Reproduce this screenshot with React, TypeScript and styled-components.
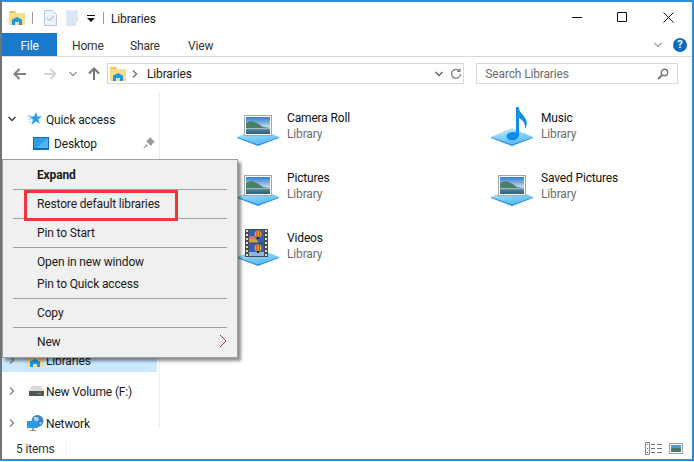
import React from "react";
import styled, { createGlobalStyle } from "styled-components";

const GlobalStyle = createGlobalStyle`
  html, body {
    margin: 0;
    padding: 0;
    background: #fff;
  }
  body {
    font-family: Roboto, "Noto Sans", sans-serif;
    font-size: 12px;
    letter-spacing: -0.15px;
    color: #1a1a1a;
  }
`;

const Window = styled.div`
  position: relative;
  box-sizing: border-box;
  width: 694px;
  height: 461px;
  display: flex;
  flex-direction: column;
  overflow: hidden;
  background: #fff;
  border-top: 2px solid #2b90d9;
  border-bottom: 2px solid #2b90d9;
  border-right: 2px solid #2b90d9;
  border-left: 2px solid #6f7478;
`;

const TitleBar = styled.div`
  display: flex;
  align-items: center;
  height: 31px;
  flex: none;
  padding-left: 7px;
`;

const TitleText = styled.span`
  margin-left: 7px;
  padding-top: 2px;
  color: #222;
`;

const QuickSep = styled.span`
  width: 1px;
  height: 12px;
  background: #9a9a9a;
  margin: 0 11px 0 7px;
`;

const WinButtons = styled.div`
  margin-left: auto;
  display: flex;
  align-items: center;
  padding-right: 18px;
  gap: 35px;
  height: 100%;
  padding-bottom: 1px;
  box-sizing: border-box;
`;

const TabBar = styled.div`
  display: flex;
  align-items: center;
  height: 23px;
  flex: none;
  border-bottom: 1px solid #dadada;
`;

const FileTab = styled.div`
  box-sizing: border-box;
  width: 55px;
  height: 100%;
  padding-top: 2px;
  display: flex;
  align-items: center;
  justify-content: center;
  background: #1979ca;
  color: #fff;
  margin-right: 15px;
`;

const Tab = styled.div`
  width: 58px;
  padding-top: 2px;
  color: #333;
`;

const TabRight = styled.div`
  margin-left: auto;
  display: flex;
  align-items: center;
  gap: 10px;
  padding-right: 5px;
`;

const HelpBadge = styled.div`
  width: 14px;
  height: 14px;
  border-radius: 50%;
  background: #0f6cbd;
  color: #fff;
  font-weight: 700;
  font-size: 11px;
  line-height: 14px;
  text-align: center;
`;

const AddressRow = styled.div`
  display: flex;
  align-items: center;
  height: 21px;
  flex: none;
  padding: 6px 14px 7px 11px;
`;

const NavButtons = styled.div`
  display: flex;
  align-items: center;
  width: 94px;
  flex: none;
`;

const NavButton = styled.span<{ $gap: number }>`
  display: flex;
  margin-right: ${(p) => p.$gap}px;
`;

const AddressBox = styled.div`
  box-sizing: border-box;
  width: 358px;
  height: 21px;
  border: 1px solid #d9d9d9;
  display: flex;
  align-items: center;
  padding-left: 2px;
  gap: 4px;
`;

const Crumb = styled.span`
  margin-left: 3px;
`;

const AddressEnd = styled.div`
  margin-left: auto;
  display: flex;
  align-items: center;
  gap: 6px;
  padding-right: 1px;
`;

const SearchBox = styled.div`
  box-sizing: border-box;
  width: 202px;
  height: 21px;
  margin-left: 12px;
  border: 1px solid #d9d9d9;
  display: flex;
  align-items: center;
  justify-content: space-between;
  padding: 0 8px;
  color: #6d6d6d;
`;

const Main = styled.div`
  flex: 1;
  min-height: 0;
  display: flex;
`;

const Nav = styled.div`
  width: 155px;
  flex: none;
  padding-top: 16px;
  margin-right: 2px;
`;

const NavDivider = styled.div`
  width: 1px;
  flex: none;
  background: #efefef;
  margin-bottom: 9px;
`;

const NavRow = styled.div<{ $selected?: boolean; $height?: number }>`
  display: flex;
  align-items: center;
  height: ${(p) => p.$height ?? 24}px;
  background: ${(p) => (p.$selected ? "#cce8ff" : "transparent")};
  color: #1a1a1a;
  position: relative;
`;

const Twisty = styled.span`
  box-sizing: border-box;
  width: 25px;
  flex: none;
  display: flex;
  justify-content: center;
  padding-right: 5px;
`;

const NavIconSlot = styled.span<{ $indent?: number }>`
  width: ${(p) => (p.$indent ? 21 : 19)}px;
  margin-left: ${(p) => p.$indent ?? 0}px;
  flex: none;
  display: flex;
  align-items: center;
`;

const NavLabel = styled.span`
  padding-top: 2px;
  white-space: nowrap;
`;

const PinSlot = styled.span`
  position: absolute;
  right: 2px;
  top: 6px;
`;

const Content = styled.div`
  flex: 1;
  display: grid;
  grid-template-columns: 254px 254px;
  grid-auto-rows: 60px;
  padding: 10px 0 0 77px;
`;

const Item = styled.div`
  display: flex;
  align-items: center;
  gap: 8px;
  height: 48px;
`;

const ItemText = styled.div`
  display: flex;
  flex-direction: column;
  padding-top: 2px;
  line-height: 16px;
`;

const ItemName = styled.span`
  color: #111;
`;

const ItemType = styled.span`
  color: #6d6d6d;
`;

const StatusBar = styled.div`
  height: 22px;
  flex: none;
  display: flex;
  align-items: center;
  padding: 0 14px;
  color: #333;
`;

const StatusText = styled.span`
  padding-top: 2px;
`;

const StatusSep = styled.span`
  width: 1px;
  height: 14px;
  background: #eee;
  margin-left: 10px;
`;

const ViewIcons = styled.div`
  margin-left: auto;
  display: flex;
  align-items: center;
  gap: 7px;
  margin-right: -5px;
`;

const Menu = styled.div`
  position: absolute;
  left: 0;
  top: 157px;
  box-sizing: border-box;
  width: 236px;
  height: 199px;
  padding: 3px 10px 0;
  background: #f0f0f0;
  border: 1px solid #a0a0a0;
  box-shadow: 3px 3px 3px rgba(0, 0, 0, 0.45);
`;

const MenuEntry = styled.div<{ $bold?: boolean }>`
  box-sizing: border-box;
  display: flex;
  align-items: center;
  justify-content: space-between;
  height: 22px;
  padding: 2px 0 0 24px;
  font-weight: ${(p) => (p.$bold ? 700 : 400)};
  color: #1a1a1a;
`;

const MenuSep = styled.div`
  height: 1px;
  background: #a0a0a0;
  margin: 4px 0 2px;
`;

const SubmenuArrow = styled.svg`
  margin-top: -2px;
`;

const Highlight = styled.div`
  position: absolute;
  left: 21px;
  top: 30px;
  width: 154px;
  height: 31px;
  box-sizing: border-box;
  border: 3px solid #f5333a;
`;

const LibFolder = ({ size = 16 }: { size?: number }) => (
  <svg width={size} height={size} viewBox="0 0 16 16">
    <path d="M0 1h6l1 2h9v12H0z" fill="#f9dd88" />
    <path d="M0 1h6l1 2H0z" fill="#eec65d" />
    <path d="M3 15V9.500h10V15h-3v-3H6v3z" fill="#1b9ae4" />
    <path d="M2.500 10 8 7l5.500 3z" fill="#1b9ae4" />
  </svg>
);

const SceneDefs = () => (
  <svg width="0" height="0" style={{ position: "absolute" }}>
    <defs>
      <linearGradient id="plat" x1="0" y1="0" x2="0.4" y2="1">
        <stop offset="0" stopColor="#cdeefd" />
        <stop offset="0.6" stopColor="#86d2f8" />
        <stop offset="1" stopColor="#5dbdf2" />
      </linearGradient>
      <linearGradient id="sky" x1="0" y1="0" x2="0" y2="1">
        <stop offset="0" stopColor="#2f7fd0" />
        <stop offset="0.4" stopColor="#8fbbe2" />
        <stop offset="0.7" stopColor="#e6eef2" />
      </linearGradient>
      <linearGradient id="water" x1="0" y1="0" x2="0" y2="1">
        <stop offset="0" stopColor="#b6cfd8" />
        <stop offset="0.3" stopColor="#4f7f96" />
        <stop offset="1" stopColor="#2f5f78" />
      </linearGradient>
    </defs>
  </svg>
);

const Platform = () => (
  <>
    <path d="M0 35 L21 26 L42 35 L21 42 Z" fill="url(#plat)" />
    <path d="M0 35 L21 42 L42 35 L42 36 L21 44 L0 36 Z" fill="#2b95e4" />
  </>
);

const PictureIcon = () => (
  <svg width="42" height="46" viewBox="0 0 42 46">
    <Platform />
    <rect x="7.500" y="13.500" width="27" height="20" fill="#fff" stroke="#a6a6a6" />
    <rect x="9" y="15" width="24" height="17" fill="url(#sky)" />
    <path d="M9 21 L14 19 L20 21 L26 25 L33 26 V32 H9 Z" fill="#4a7f68" />
    <rect x="9" y="26" width="24" height="6" fill="url(#water)" />
  </svg>
);

const MusicIcon = () => (
  <svg width="42" height="46" viewBox="0 0 42 46">
    <Platform />
    <path d="M25 5 H27.500 C28 11 34 13 35.500 19 C36.200 22.500 35.500 25 34 27 C34.500 23 33.500 19 28 16 V33 C28 37 23 39 19 38 C14.500 37 14.500 33 18 31 C20.500 29.700 23 29.700 25 30.500 Z" fill="#0b8fe6" />
  </svg>
);

const Balloon = ({ y }: { y: number }) => (
  <g>
    <circle cx="21" cy={y} r="3.500" fill="#e8a021" />
    <path d={`M19.500 ${y - 3}h1v6h-1zM22 ${y - 3}h1v6h-1z`} fill="#c4392f" />
    <path d={`M20 ${y + 3}h2v2h-2z`} fill="#1a1a1a" />
  </g>
);

const VideoIcon = () => (
  <svg width="42" height="46" viewBox="0 0 42 46">
    <Platform />
    <rect x="8" y="7" width="23" height="28" fill="#4a4a4a" />
    <rect x="12" y="8" width="15" height="12.500" fill="#2a62c0" />
    <rect x="12" y="22" width="15" height="12" fill="#2a62c0" />
    <path d="M12 15l5-1 2 3 3 3.500H12z" fill="#c9a04a" />
    <path d="M13 14h4v3h-4z" fill="#d66a8f" />
    <path d="M12 30h15v4H12z" fill="#8fb4d8" />
    <Balloon y={12} />
    <Balloon y={26} />
    {[8, 12, 16, 20, 24, 28, 32].map((y) => (
      <g key={y}>
        <rect x="9" y={y} width="2" height="2" fill="#ddd" />
        <rect x="28" y={y} width="2" height="2" fill="#ddd" />
      </g>
    ))}
  </svg>
);

const Chevron = ({ dir, color = "#8a8a8a" }: { dir: "right" | "down"; color?: string }) => (
  <svg width="10" height="10" viewBox="0 0 10 10">
    <path
      d={dir === "right" ? "M3 1.500 L6.500 5 L3 8.500" : "M1.500 3 L5 6.500 L8.500 3"}
      fill="none"
      stroke={color}
      strokeWidth="1.500"
    />
  </svg>
);

const Arrow = ({ dir, color }: { dir: "left" | "right" | "up"; color: string }) => {
  const d = {
    left: "M13 7 H2 M6.500 2 L1.500 7 L6.500 12",
    right: "M1 7 H12 M7.500 2 L12.500 7 L7.500 12",
    up: "M7 13 V2 M2 6.500 L7 1.500 L12 6.500",
  }[dir];
  return (
    <svg width="14" height="14" viewBox="0 0 14 14">
      <path d={d} fill="none" stroke={color} strokeWidth="2" />
    </svg>
  );
};

const items = [
  { name: "Camera Roll", icon: <PictureIcon /> },
  { name: "Music", icon: <MusicIcon /> },
  { name: "Pictures", icon: <PictureIcon /> },
  { name: "Saved Pictures", icon: <PictureIcon /> },
  { name: "Videos", icon: <VideoIcon /> },
];

const App: React.FC = () => (
  <>
    <GlobalStyle />
    <SceneDefs />
    <Window>
      <TitleBar>
        <LibFolder />
        <QuickSep />
        <svg width="13" height="16" viewBox="0 0 13 16">
          <path d="M.5.500h8l4 4v11H.5z" fill="#eef3fa" stroke="#b9c7dc" />
          <path d="M3 8l2.500 2.500L10 6" fill="none" stroke="#b9c7dc" strokeWidth="1.200" />
        </svg>
        <svg width="13" height="16" viewBox="0 0 13 16" style={{ marginLeft: 9 }}>
          <path d="M0 0h12v16H0z" fill="#dce6f4" />
          <path d="M10 12h3v4h-3z" fill="#fff" />
        </svg>
        <svg width="8" height="8" viewBox="0 0 8 8" style={{ margin: "2px 0 0 8px" }}>
          <path d="M0 0h8v1H0zM0 3h8L4 7z" fill="#111" />
        </svg>
        <QuickSep style={{ margin: "0 0 0 8px" }} />
        <TitleText>Libraries</TitleText>
        <WinButtons>
          <svg width="10" height="11" viewBox="0 0 10 11">
            <path d="M0 5.500h10" stroke="#111" />
          </svg>
          <svg width="10" height="10" viewBox="0 0 10 10" style={{ marginRight: 1 }}>
            <path d="M.5.500h9v9h-9z" fill="none" stroke="#111" />
          </svg>
          <svg width="11" height="11" viewBox="0 0 11 11">
            <path d="M.5.500l10 10M10.500.500l-10 10" stroke="#111" />
          </svg>
        </WinButtons>
      </TitleBar>

      <TabBar>
        <FileTab>File</FileTab>
        <Tab>Home</Tab>
        <Tab>Share</Tab>
        <Tab>View</Tab>
        <TabRight>
          <Chevron dir="down" color="#a8a8a8" />
          <HelpBadge>?</HelpBadge>
        </TabRight>
      </TabBar>

      <AddressRow>
        <NavButtons>
          <NavButton $gap={16}>
            <Arrow dir="left" color="#808080" />
          </NavButton>
          <NavButton $gap={11}>
            <Arrow dir="right" color="#d5d5d5" />
          </NavButton>
          <NavButton $gap={9}>
            <Chevron dir="down" color="#9a9a9a" />
          </NavButton>
          <NavButton $gap={0}>
            <Arrow dir="up" color="#777" />
          </NavButton>
        </NavButtons>
        <AddressBox>
          <LibFolder />
          <Chevron dir="right" color="#777" />
          <Crumb>Libraries</Crumb>
          <AddressEnd>
            <Chevron dir="down" color="#666" />
            <svg width="12" height="12" viewBox="0 0 12 12">
              <path d="M9.500 3A4.500 4.500 0 1 0 10.500 6" fill="none" stroke="#808080" strokeWidth="1.300" />
              <path d="M10.500 0v4h-4z" fill="#808080" />
            </svg>
          </AddressEnd>
        </AddressBox>
        <SearchBox>
          <span>Search Libraries</span>
          <svg width="12" height="12" viewBox="0 0 12 12">
            <circle cx="7.500" cy="4.500" r="3.200" fill="none" stroke="#777" strokeWidth="1.400" />
            <path d="M5 7L1 11" stroke="#777" strokeWidth="2" />
          </svg>
        </SearchBox>
      </AddressRow>

      <Main>
        <Nav>
          <NavRow>
            <Twisty>
              <Chevron dir="down" color="#444" />
            </Twisty>
            <NavIconSlot>
              <svg width="15" height="14" viewBox="0 0 15 14">
                <path d="M9 0l1.500 4.500H15l-3.700 2.800L12.700 12 9 9.200 4.500 13l1.500-5.500L2 4.500h5z" fill="#2a9be6" />
                <path d="M0 4h4M1 7h3M2 10h2" stroke="#8ccaf3" />
              </svg>
            </NavIconSlot>
            <NavLabel>Quick access</NavLabel>
          </NavRow>
          <NavRow>
            <Twisty />
            <NavIconSlot $indent={6}>
              <svg width="16" height="13" viewBox="0 0 16 13">
                <path d="M0 0h16v13H0z" fill="#0f6cb5" />
                <path d="M1 1h14v10H1z" fill="#2f9ce8" />
                <path d="M3 11h12V1z" fill="#56b3f0" />
              </svg>
            </NavIconSlot>
            <NavLabel>Desktop</NavLabel>
            <PinSlot>
              <svg width="12" height="12" viewBox="0 0 12 12">
                <path d="M7 0l5 5-2 1-2 3-5-5 3-2zM3.500 7L0 12l5-3.500z" fill="#9a9a9a" />
              </svg>
            </PinSlot>
          </NavRow>
          {/* rows covered by the context menu */}
          <NavRow $height={192} />
          <NavRow $selected $height={25}>
            <Twisty>
              <Chevron dir="right" color="#8a8a8a" />
            </Twisty>
            <NavIconSlot>
              <LibFolder />
            </NavIconSlot>
            <NavLabel>Libraries</NavLabel>
          </NavRow>
          <NavRow $height={7} />
          <NavRow>
            <Twisty>
              <Chevron dir="right" color="#8a8a8a" />
            </Twisty>
            <NavIconSlot>
              <svg width="15" height="10" viewBox="0 0 15 10" style={{ marginLeft: 2 }}>
                <path d="M2.500 0h10L15 5H0z" fill="#dcdcdc" />
                <path d="M0 5h15v5H0z" fill="#555" />
                <path d="M9 7h3v1H9z" fill="#45d04f" />
              </svg>
            </NavIconSlot>
            <NavLabel>New Volume (F:)</NavLabel>
          </NavRow>
          <NavRow $height={8} />
          <NavRow>
            <Twisty>
              <Chevron dir="right" color="#8a8a8a" />
            </Twisty>
            <NavIconSlot>
              <svg width="17" height="16" viewBox="0 0 17 16">
                <circle cx="10.500" cy="6" r="6" fill="#3f86c9" />
                <path d="M7 2h4l1 3-3 2-2-2zM12 8l3-1-1 3z" fill="#a8d0ee" />
                <path d="M0 6h11v7H0z" fill="#2a9be6" />
                <path d="M3 15h6v1H3zM5 13h2v2H5z" fill="#9a9a9a" />
              </svg>
            </NavIconSlot>
            <NavLabel>Network</NavLabel>
          </NavRow>
        </Nav>
        <NavDivider />
        <Content>
          {items.map((it) => (
            <Item key={it.name}>
              {it.icon}
              <ItemText>
                <ItemName>{it.name}</ItemName>
                <ItemType>Library</ItemType>
              </ItemText>
            </Item>
          ))}
        </Content>
      </Main>

      <StatusBar>
        <StatusText>5 items</StatusText>
        <StatusSep />
        <ViewIcons>
          <svg width="17" height="13" viewBox="0 0 17 13">
            <path d="M.5.500h4v12h-4z" fill="#fff" stroke="#8a8a8a" />
            <path d="M2 2h1v1H2zM2 6h1v1H2z" fill="#777" />
            <path d="M2 10h1v1H2z" fill="#c22" />
            <path d="M6 2.500h4M12 2.500h5M6 6.500h4M12 6.500h5M6 10.500h4M12 10.500h5" stroke="#777" />
          </svg>
          <svg width="14" height="11" viewBox="0 0 14 11">
            <path d="M.5.500h13v10H.5z" fill="#fff" stroke="#a0a0a0" />
            <path d="M2 2h10v3H2z" fill="#4a9adf" />
            <path d="M2 5h10v4H2z" fill="#4f7a66" />
          </svg>
        </ViewIcons>
      </StatusBar>

      <Menu>
        <MenuEntry $bold>Expand</MenuEntry>
        <MenuSep />
        <MenuEntry>Restore default libraries</MenuEntry>
        <MenuSep />
        <MenuEntry>Pin to Start</MenuEntry>
        <MenuSep />
        <MenuEntry>Open in new window</MenuEntry>
        <MenuEntry>Pin to Quick access</MenuEntry>
        <MenuSep />
        <MenuEntry>Copy</MenuEntry>
        <MenuSep />
        <MenuEntry>
          New
          <SubmenuArrow width="8" height="14" viewBox="0 0 8 14">
            <path d="M1 1l6 6-6 6" fill="none" stroke="#9c3a3a" />
          </SubmenuArrow>
        </MenuEntry>
        <Highlight />
      </Menu>
    </Window>
  </>
);

export default App;
